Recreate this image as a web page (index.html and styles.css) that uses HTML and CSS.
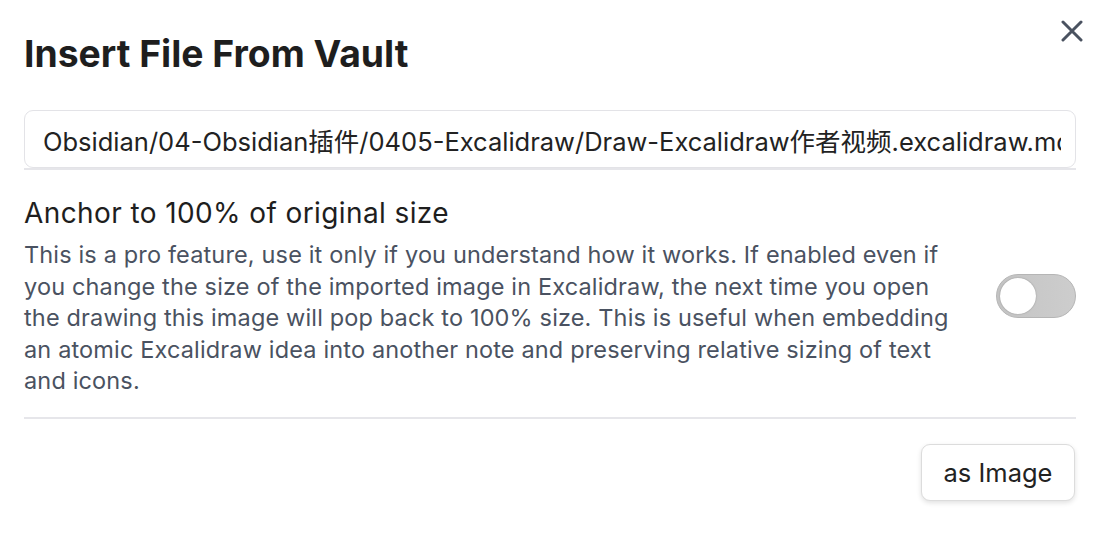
FILE: index.html
```html
<!DOCTYPE html>
<html>
<head>
<meta charset="utf-8">
<link rel="stylesheet" href="styles.css">
</head>
<body>
<div class="modal">
  <button class="close" aria-label="Close">
    <svg width="22" height="22" viewBox="0 0 22 22"><path d="M2 2L20 20M20 2L2 20" stroke="#4a5260" stroke-width="3" stroke-linecap="round"/></svg>
  </button>
  <h1 class="title">Insert File From Vault</h1>
  <div class="input-wrap">
    <input class="path" type="text" value="Obsidian/04-Obsidian插件/0405-Excalidraw/Draw-Excalidraw作者视频.excalidraw.md">
  </div>
  <div class="setting">
    <div class="info">
      <div class="name">Anchor to 100% of original size</div>
      <div class="desc">This is a pro feature, use it only if you understand how it works. If enabled even if<br>you change the size of the imported image in Excalidraw, the next time you open<br>the drawing this image will pop back to 100% size. This is useful when embedding<br>an atomic Excalidraw idea into another note and preserving relative sizing of text<br>and icons.</div>
    </div>
    <div class="toggle"><div class="knob"></div></div>
  </div>
  <div class="actions">
    <button class="btn">as Image</button>
  </div>
</div>
</body>
</html>
```
FILE: styles.css
```css
html, body {
  margin: 0;
  padding: 0;
  background: #ffffff;
}
body {
  font-family: Inter, "Noto Sans CJK SC", sans-serif;
  color: #222222;
}
.modal {
  position: relative;
  padding: 24px 22px 0 24px;
  box-sizing: border-box;
  width: 1098px;
  height: 546px;
}
.close {
  position: absolute;
  top: 20px;
  right: 15px;
  width: 22px;
  height: 22px;
  padding: 0;
  border: 0;
  background: none;
  display: flex;
}
.title {
  margin: 0;
  font-size: 37.3px;
  font-weight: 700;
  line-height: 60px;
  color: #1e1e1e;
}
.input-wrap {
  margin-top: 26px;
  border-bottom: 2px solid #e6e6ea;
}
.path {
  display: block;
  width: 100%;
  box-sizing: border-box;
  height: 58px;
  border: 1.5px solid #e3e3e7;
  border-radius: 9px;
  padding: 0 14px 0 18px;
  font-family: Inter, "Noto Sans CJK SC", sans-serif;
  font-size: 25.5px;
  color: #222222;
  background: #fff;
  outline: none;
}
.setting {
  display: flex;
  align-items: center;
  padding: 25px 0 20px 0;
  border-bottom: 2px solid #e6e6ea;
}
.info {
  flex: 1;
  min-width: 0;
  margin-right: 20px;
  white-space: nowrap;
}
.name {
  font-size: 28px;
  line-height: 36px;
  letter-spacing: 0.4px;
  color: #1e1e1e;
}
.desc {
  margin-top: 8px;
  font-size: 23.5px;
  line-height: 31.5px;
  letter-spacing: 0.15px;
  color: #4a5261;
}
.toggle {
  width: 80px;
  height: 44px;
  box-sizing: border-box;
  border-radius: 22px;
  background: linear-gradient(90deg, #c4c4c4, #cdcdcd);
  border: 1.5px solid #b5b5b5;
  display: flex;
  align-items: center;
  padding-left: 3px;
  flex-shrink: 0;
}
.knob {
  width: 36px;
  height: 36px;
  border-radius: 50%;
  background: #ffffff;
  box-shadow: 0 0 1.5px rgba(0,0,0,0.35);
}
.actions {
  display: flex;
  justify-content: flex-end;
  padding-top: 25px;
  padding-right: 1px;
}
.btn {
  width: 154px;
  height: 57px;
  border: 1.5px solid #dcdcdc;
  border-radius: 9px;
  background: #ffffff;
  box-shadow: 0 2px 5px rgba(0,0,0,0.12);
  font-family: Inter, sans-serif;
  font-size: 25.5px;
  color: #222222;
  padding: 0;
}
```
